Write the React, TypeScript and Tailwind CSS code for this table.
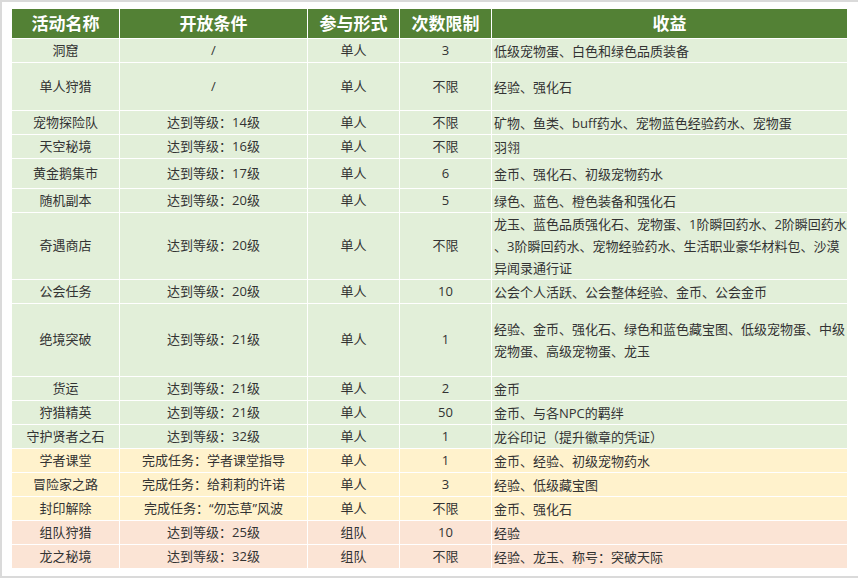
import React from 'react';

type Row = {
  name: string;
  cond: string;
  mode: string;
  limit: string;
  reward: string[];
  h: string;
  bg: string;
};

const green = 'bg-[#e2efd9]';
const yellow = 'bg-[#fff2cc]';
const pink = 'bg-[#fbe4d5]';

const rows: Row[] = [
  { name: '洞窟', cond: '/', mode: '单人', limit: '3', reward: ['低级宠物蛋、白色和绿色品质装备'], h: 'h-[23px]', bg: green },
  { name: '单人狩猎', cond: '/', mode: '单人', limit: '不限', reward: ['经验、强化石'], h: 'h-[47px]', bg: green },
  { name: '宠物探险队', cond: '达到等级：14级', mode: '单人', limit: '不限', reward: ['矿物、鱼类、buff药水、宠物蓝色经验药水、宠物蛋'], h: 'h-[23px]', bg: green },
  { name: '天空秘境', cond: '达到等级：16级', mode: '单人', limit: '不限', reward: ['羽翎'], h: 'h-[23px]', bg: green },
  { name: '黄金鹅集市', cond: '达到等级：17级', mode: '单人', limit: '6', reward: ['金币、强化石、初级宠物药水'], h: 'h-[29px]', bg: green },
  { name: '随机副本', cond: '达到等级：20级', mode: '单人', limit: '5', reward: ['绿色、蓝色、橙色装备和强化石'], h: 'h-[23px]', bg: green },
  {
    name: '奇遇商店',
    cond: '达到等级：20级',
    mode: '单人',
    limit: '不限',
    reward: ['龙玉、蓝色品质强化石、宠物蛋、1阶瞬回药水、2阶瞬回药水', '、3阶瞬回药水、宠物经验药水、生活职业豪华材料包、沙漠', '异闻录通行证'],
    h: 'h-[66px]',
    bg: green,
  },
  { name: '公会任务', cond: '达到等级：20级', mode: '单人', limit: '10', reward: ['公会个人活跃、公会整体经验、金币、公会金币'], h: 'h-[23px]', bg: green },
  {
    name: '绝境突破',
    cond: '达到等级：21级',
    mode: '单人',
    limit: '1',
    reward: ['经验、金币、强化石、绿色和蓝色藏宝图、低级宠物蛋、中级', '宠物蛋、高级宠物蛋、龙玉'],
    h: 'h-[72px]',
    bg: green,
  },
  { name: '货运', cond: '达到等级：21级', mode: '单人', limit: '2', reward: ['金币'], h: 'h-[23px]', bg: green },
  { name: '狩猎精英', cond: '达到等级：21级', mode: '单人', limit: '50', reward: ['金币、与各NPC的羁绊'], h: 'h-[23px]', bg: green },
  { name: '守护贤者之石', cond: '达到等级：32级', mode: '单人', limit: '1', reward: ['龙谷印记（提升徽章的凭证）'], h: 'h-[23px]', bg: green },
  { name: '学者课堂', cond: '完成任务：学者课堂指导', mode: '单人', limit: '1', reward: ['金币、经验、初级宠物药水'], h: 'h-[23px]', bg: yellow },
  { name: '冒险家之路', cond: '完成任务：给莉莉的许诺', mode: '单人', limit: '3', reward: ['经验、低级藏宝图'], h: 'h-[23px]', bg: yellow },
  { name: '封印解除', cond: '完成任务：“勿忘草”风波', mode: '单人', limit: '不限', reward: ['金币、强化石'], h: 'h-[23px]', bg: yellow },
  { name: '组队狩猎', cond: '达到等级：25级', mode: '组队', limit: '10', reward: ['经验'], h: 'h-[23px]', bg: pink },
  { name: '龙之秘境', cond: '达到等级：32级', mode: '组队', limit: '不限', reward: ['经验、龙玉、称号：突破天际'], h: 'h-[23px]', bg: pink },
];

const cols = 'grid grid-cols-[107px_187px_91px_91px_355px] gap-x-px';
const headers = ['活动名称', '开放条件', '参与形式', '次数限制', '收益'];

function App() {
  return (
    <div className="h-[578px] w-[880px] border-t-2 border-b-2 border-l-2 border-[#dadada] bg-white pl-[10px] pt-[7px] font-['Open_Sans','Noto_Sans_CJK_SC',sans-serif] text-[13px] text-[#333333]">
      <div className="flex w-[835px] flex-col gap-y-px">
        <div className={cols}>
          {headers.map((t) => (
            <div key={t} className="flex h-[29px] items-center justify-center bg-[#538135] text-[17px] font-bold text-white">
              {t}
            </div>
          ))}
        </div>
        {rows.map((r) => (
          <div key={r.name} className={cols}>
            <div className={`flex items-center justify-center ${r.h} ${r.bg}`}>{r.name}</div>
            <div className={`flex items-center justify-center ${r.h} ${r.bg}`}>{r.cond}</div>
            <div className={`flex items-center justify-center ${r.h} ${r.bg}`}>{r.mode}</div>
            <div className={`flex items-center justify-center ${r.h} ${r.bg}`}>{r.limit}</div>
            <div className={`flex flex-col justify-center whitespace-nowrap pl-[2px] leading-[22px] ${r.h} ${r.bg}`}>
              {r.reward.map((line) => (
                <span key={line}>{line}</span>
              ))}
            </div>
          </div>
        ))}
      </div>
    </div>
  );
}

export default App;
